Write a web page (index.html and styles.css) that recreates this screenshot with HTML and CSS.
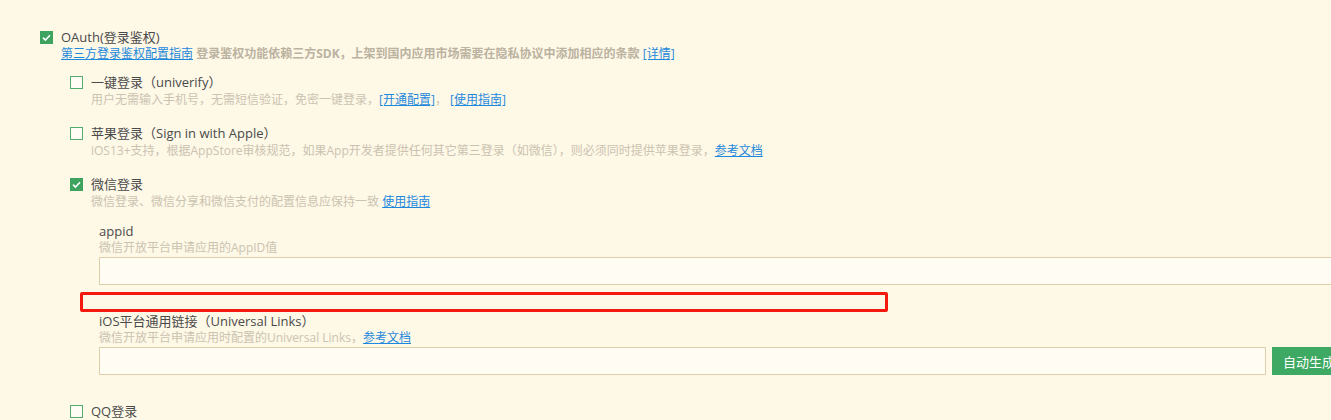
FILE: index.html
```html
<!DOCTYPE html>
<html lang="zh-CN">
<head>
<meta charset="utf-8">
<title>OAuth</title>
<link rel="stylesheet" href="styles.css">
</head>
<body>
<div class="page">
  <div class="item top">
    <div class="label-row">
      <span class="cb checked"><svg viewBox="0 0 13 13" width="13" height="13"><path d="M3 6.6 L5.4 9 L10 4.2" fill="none" stroke="#fff" stroke-width="1.6"/></svg></span>
      <span class="label">OAuth(登录鉴权)</span>
    </div>
    <div class="desc main-desc"><a class="link">第三方登录鉴权配置指南</a> <b>登录鉴权功能依赖三方SDK，上架到国内应用市场需要在隐私协议中添加相应的条款</b> <a class="link">[详情]</a></div>

    <div class="sub">
      <div class="item">
        <div class="label-row">
          <span class="cb"></span>
          <span class="label">一键登录（univerify）</span>
        </div>
        <div class="desc">用户无需输入手机号，无需短信验证，免密一键登录，<a class="link">[开通配置]</a>，&nbsp;<a class="link">[使用指南]</a></div>
      </div>

      <div class="item">
        <div class="label-row">
          <span class="cb"></span>
          <span class="label">苹果登录（Sign in with Apple）</span>
        </div>
        <div class="desc">iOS13+支持，根据AppStore审核规范，如果App开发者提供任何其它第三登录（如微信），则必须同时提供苹果登录，<a class="link">参考文档</a></div>
      </div>

      <div class="item">
        <div class="label-row">
          <span class="cb checked"><svg viewBox="0 0 13 13" width="13" height="13"><path d="M3 6.6 L5.4 9 L10 4.2" fill="none" stroke="#fff" stroke-width="1.6"/></svg></span>
          <span class="label">微信登录</span>
        </div>
        <div class="desc">微信登录、微信分享和微信支付的配置信息应保持一致 <a class="link">使用指南</a></div>

        <div class="fields">
          <div class="field">
            <div class="flabel">appid</div>
            <div class="fdesc">微信开放平台申请应用的AppID值</div>
            <input class="input wide" type="text">
          </div>
          <div class="marker"></div>
          <div class="field">
            <div class="flabel">iOS平台通用链接（Universal Links）</div>
            <div class="fdesc">微信开放平台申请应用时配置的Universal Links，<a class="link">参考文档</a></div>
            <div class="input-row">
              <input class="input" type="text">
              <button class="btn">自动生成</button>
            </div>
          </div>
        </div>
      </div>

      <div class="item qq">
        <div class="label-row">
          <span class="cb"></span>
          <span class="label">QQ登录</span>
        </div>
      </div>
    </div>
  </div>
</div>
</body>
</html>
```

FILE: styles.css
```css
html, body {
  margin: 0;
  padding: 0;
  background: #fef8e7;
  overflow: hidden;
}
body {
  width: 1331px;
  height: 420px;
  font-family: "Open Sans", "Noto Sans CJK SC", sans-serif;
  color: #4a4a4a;
}
.page {
  padding: 29px 0 0 40px;
  position: relative;
}
.label-row {
  display: flex;
  align-items: center;
  height: 16px;
}
.cb {
  box-sizing: border-box;
  width: 13px;
  height: 13px;
  border: 1px solid #52ac6e;
  background: #fffdf6;
  display: inline-flex;
  margin-right: 8px;
  flex: none;
}
.cb.checked {
  background: #3ea35f;
  border-color: #3ea35f;
}
.cb svg { display: block; margin: -1px; }
.label {
  font-size: 13px;
  line-height: 16px;
  color: #4a4a4a;
}
.desc {
  margin-left: 21px;
  font-size: 12px;
  line-height: 18px;
  color: #cbc3b0;
  margin-top: 1px;
  white-space: nowrap;
}
.main-desc { margin-top: 0; }
.main-desc b {
  color: #bbb29f;
  font-weight: bold;
}
.link {
  color: #1e88dc;
  text-decoration: underline;
  cursor: pointer;
}
.sub {
  margin-left: 30px;
}
.sub .item {
  margin-top: 16px;
}
.sub .item:first-child {
  margin-top: 11px;
}
.sub .item.qq {
  margin-top: 28px;
}
.fields {
  margin-left: 29px;
  margin-top: 12px;
}
.flabel {
  font-size: 13px;
  line-height: 16px;
  color: #4a4a4a;
}
.fdesc {
  font-size: 12px;
  line-height: 18px;
  color: #cbc3b0;
  white-space: nowrap;
}
.input {
  box-sizing: border-box;
  height: 28px;
  border: 1px solid #ddd0a8;
  background: #fffcf3;
  outline: none;
  padding: 0 8px;
  font: inherit;
  display: block;
}
.input.wide {
  width: 1260px;
}
.marker {
  position: absolute;
  left: 80px;
  top: 292px;
  width: 808px;
  height: 20px;
  box-sizing: border-box;
  border: 3px solid #f41a10;
  border-radius: 2px;
}
.fields .field + .marker + .field {
  margin-top: 28px;
}
.input-row {
  display: flex;
  gap: 6px;
}
.input-row .input {
  width: 1167px;
  flex: none;
}
.btn {
  flex: none;
  height: 28px;
  border: none;
  background: #3ea962;
  color: #fff;
  font: inherit;
  font-size: 13px;
  padding: 0 11px;
  white-space: nowrap;
}
```
